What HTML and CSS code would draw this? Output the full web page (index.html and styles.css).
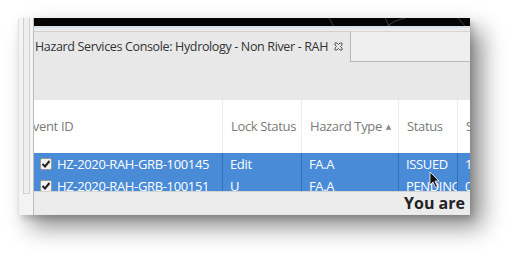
FILE: index.html
```html
<!DOCTYPE html>
<html>
<head>
<meta charset="utf-8">
<link rel="stylesheet" href="styles.css">
</head>
<body>
<div class="stage">
  <div class="shot">
    <div class="side"><div class="side-inner"></div></div>
    <div class="win">
      <div class="topbar">
        <svg class="topbar-lines" width="437" height="8" viewBox="0 0 437 8"><path d="M296 0 L300 8 M354 8 L362 3 L372 0 M352 0 L356 8 M425 0 L432 8" fill="none" stroke="#555" stroke-width="0.7"/></svg>
      </div>
      <div class="tabs">
        <div class="tab">
          <span class="tab-title">Hazard Services Console: Hydrology - Non River - RAH</span>
          <svg class="tab-close" width="9" height="9" viewBox="0 0 9 9"><path d="M1 1 L3 1 L4.5 2.5 L6 1 L8 1 L8 3 L6.5 4.5 L8 6 L8 8 L6 8 L4.5 6.5 L3 8 L1 8 L1 6 L2.5 4.5 L1 3 Z" fill="none" stroke="#555" stroke-width="1"/></svg>
        </div>
        <div class="tab-rest"></div>
      </div>
      <div class="toolbar"></div>
      <div class="table">
        <div class="thead">
          <div class="th th-first">Event ID</div>
          <div class="th">Lock Status</div>
          <div class="th">Hazard Type <span class="sort">&#9650;</span></div>
          <div class="th">Status</div>
          <div class="th th-last">Start</div>
        </div>
        <div class="tbody">
          <div class="tr">
            <div class="td td-first"><span class="cb"><svg width="10" height="10" viewBox="0 0 10 10"><path d="M1.5 5 L4 7.5 L8.5 2" fill="none" stroke="#222" stroke-width="2"/></svg></span>HZ-2020-RAH-GRB-100145</div>
            <div class="td">Edit</div>
            <div class="td">FA.A</div>
            <div class="td">ISSUED</div>
            <div class="td td-last">1</div>
          </div>
          <div class="tr">
            <div class="td td-first"><span class="cb"><svg width="10" height="10" viewBox="0 0 10 10"><path d="M1.5 5 L4 7.5 L8.5 2" fill="none" stroke="#222" stroke-width="2"/></svg></span>HZ-2020-RAH-GRB-100151</div>
            <div class="td">U</div>
            <div class="td">FA.A</div>
            <div class="td">PENDING</div>
            <div class="td td-last">0</div>
          </div>
          <svg class="cursor" width="12" height="18" viewBox="0 0 12 18"><path d="M1 1 L1 14 L4 11 L6.5 16.5 L8.5 15.5 L6 10 L10 10 Z" fill="#111" stroke="#fff" stroke-width="0.8"/></svg>
        </div>
      </div>
      <div class="status"><span class="status-text">You are</span></div>
    </div>
  </div>
</div>
</body>
</html>
```

FILE: styles.css
```css
html, body {
  margin: 0;
  padding: 0;
  background: #ffffff;
}
body {
  width: 513px;
  height: 257px;
  overflow: hidden;
  font-family: "Open Sans", "DejaVu Sans", sans-serif;
  letter-spacing: -0.35px;
}
.stage {
  padding: 18px 0 0 18px;
}
.shot {
  display: flex;
  width: 452px;
  height: 197px;
  box-shadow: 12px 12px 22px rgba(0, 0, 0, 0.45), 3px 4px 6px rgba(0, 0, 0, 0.15);
}
.side {
  width: 15px;
  background: #f3f3f3;
  border-left: 1px solid #e2e2e2;
  box-sizing: border-box;
  padding: 0 0 0 4px;
  display: flex;
  flex-direction: column;
}
.side-inner {
  height: 175px;
  margin-right: 3px;
  border-left: 1px solid #cfcfcf;
  border-right: 1px solid #d2d2d2;
  border-bottom: 1px solid #d2d2d2;
  background: #eeeeee;
}
.win {
  width: 437px;
  height: 197px;
  overflow: hidden;
  display: flex;
  flex-direction: column;
  background: #e8e8e8;
  border-left: 1px solid #bdbdbd;
  box-sizing: border-box;
}
.topbar {
  height: 8px;
  background: #050505;
  flex: none;
  display: flex;
}
.topbar-lines {
  display: block;
}
.tabs {
  height: 36px;
  flex: none;
  display: flex;
  border-top: 2px solid #d8e2ec;
  box-sizing: border-box;
  padding-top: 3px;
  background: #ececec;
}
.tab {
  width: 317px;
  box-sizing: border-box;
  background: #e8e8e8;
  border-top: 1px solid #d0d0d0;
  border-right: 1px solid #b8b8b8;
  display: flex;
  align-items: center;
  padding: 0 0 2px 1px;
  gap: 6px;
}
.tab-title {
  font-size: 12.5px;
  color: #333333;
  white-space: nowrap;
}
.tab-close {
  flex: none;
}
.tab-rest {
  flex: 1;
  border-top: 1px solid #d6d6d6;
  border-bottom: 1px solid #b8b8b8;
  background: #efefef;
}
.toolbar {
  height: 38px;
  flex: none;
  background: #e8e8e8;
}
.table {
  flex: none;
  background: #ffffff;
}
.thead, .tr {
  display: grid;
  grid-template-columns: 189px 79px 97px 59px 12px;
}
.thead {
  height: 53px;
  background: #ffffff;
}
.th {
  font-size: 13px;
  color: #7a7a7a;
  display: flex;
  align-items: center;
  padding-left: 8px;
  padding-bottom: 1px;
  border-right: 1px solid #ececec;
  white-space: nowrap;
  overflow: hidden;
}
.th-first {
  padding-left: 0;
  text-indent: -8px;
}
.th-last {
  border-right: none;
}
.sort {
  font-size: 7px;
  margin-left: 4px;
  color: #888;
}
.tbody {
  position: relative;
  height: 38px;
  overflow: hidden;
  background: #4a8bd8;
}
.tr {
  height: 22px;
}
.td {
  font-size: 13px;
  color: #ffffff;
  display: flex;
  align-items: center;
  padding-left: 7px;
  border-right: 1px solid #3b6fb3;
  white-space: nowrap;
  overflow: hidden;
}
.td-first {
  padding-left: 6px;
}
.td-last {
  border-right: none;
}
.cb {
  width: 12px;
  height: 12px;
  box-sizing: border-box;
  background: #f2f2f2;
  border: 1px solid #9a9a9a;
  border-radius: 2px;
  display: flex;
  align-items: center;
  justify-content: center;
  margin-right: 5px;
  flex: none;
}
.cursor {
  position: absolute;
  left: 395px;
  top: 18px;
}
.status {
  height: 22px;
  flex: none;
  background: #ececec;
  border-top: 1px solid #d4d4d4;
  display: flex;
  align-items: center;
  justify-content: flex-end;
  overflow: hidden;
}
.status-text {
  font-size: 16px;
  font-weight: bold;
  color: #222222;
  white-space: nowrap;
  margin-right: 5px;
  letter-spacing: 0;
}
```
